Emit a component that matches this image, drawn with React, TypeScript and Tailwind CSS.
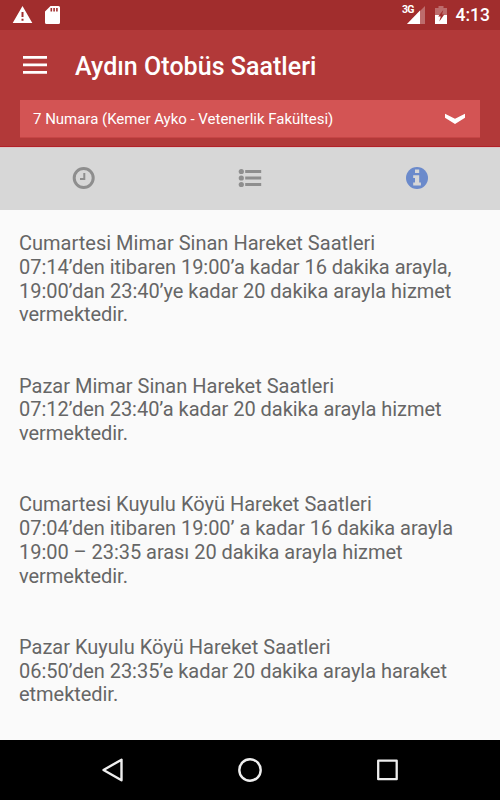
const NOTICES = [
  {
    title: 'Cumartesi Mimar Sinan Hareket Saatleri',
    lines: [
      '07:14’den itibaren 19:00’a kadar 16 dakika arayla,',
      '19:00’dan 23:40’ye kadar 20 dakika arayla hizmet',
      'vermektedir.',
    ],
  },
  {
    title: 'Pazar Mimar Sinan Hareket Saatleri',
    lines: ['07:12’den 23:40’a kadar 20 dakika arayla hizmet', 'vermektedir.'],
  },
  {
    title: 'Cumartesi Kuyulu Köyü Hareket Saatleri',
    lines: [
      '07:04’den itibaren 19:00’ a kadar 16 dakika arayla',
      '19:00 – 23:35 arası 20 dakika arayla hizmet',
      'vermektedir.',
    ],
  },
  {
    title: 'Pazar Kuyulu Köyü Hareket Saatleri',
    lines: ['06:50’den 23:35’e kadar 20 dakika arayla haraket', 'etmektedir.'],
  },
];

function StatusBar() {
  return (
    <div className="flex h-[30px] items-center bg-[#a12d2d] pl-3 pr-[10px] text-white">
      <svg width="22" height="20" viewBox="0 0 22 20" fill="currentColor">
        <path fillRule="evenodd" d="M10.5 1 20.3 18H.7L10.5 1ZM9.5 7v5h2V7h-2Zm0 6.7v2h2v-2h-2Z" />
      </svg>
      <svg className="ml-[11px]" width="16" height="20" viewBox="0 0 16 20" fill="currentColor">
        <path fillRule="evenodd" d="M5.5 1H13.5Q15 1 15 2.5V17.5Q15 19 13.5 19H1.5Q0 19 0 17.5V6.5L5.5 1ZM5.5 3v3.5h1.6V3H5.5Zm2.8 0v3.5h1.6V3H8.3Zm2.8 0v3.5h1.6V3h-1.6Z" />
      </svg>
      <div className="ml-auto flex items-center">
        <span className="mb-[9px] mr-[-7px] text-[10.5px] font-bold leading-none tracking-[-0.8px]">3G</span>
        <svg width="18" height="20" viewBox="0 0 18 20" fill="currentColor">
          <path d="M18 1V19H0L18 1Z" opacity=".3" />
          <path d="M13 5.5V19H0L13 5.5Z" />
        </svg>
        <svg className="ml-[10px]" width="12" height="20" viewBox="0 0 12 20" fill="currentColor">
          <path d="M0 3H3.5V1h5v2H12v7H0V3Z" opacity=".3" />
          <path d="M0 10h12v9H0z" />
          <path d="M8.3 5 3.2 11.5h2.5L4.3 16.5 9.3 9.5H7L8.3 5Z" fill="#a12d2d" />
        </svg>
        <span className="ml-[9px] pt-px text-[17.5px] font-medium leading-none">4:13</span>
      </div>
    </div>
  );
}

function Header() {
  return (
    <header className="h-[117px] border-b border-[#b32028] bg-[#b23939] px-5 text-white">
      <div className="flex h-[70px] items-center">
        <svg className="ml-[3px]" width="24" height="18" viewBox="0 0 24 18" fill="currentColor">
          <path d="M0 0h24v2.7H0zM0 7.5h24v2.7H0zM0 15h24v2.7H0z" />
        </svg>
        <h1 className="ml-7 pt-[3px] text-[25px] font-medium leading-[30px] tracking-[0.04px]">Aydın Otobüs Saatleri</h1>
      </div>
      <button className="flex h-[38px] w-full items-center justify-between border-b border-[#c64545] bg-[#d35454] pl-[13px] pr-[15px]">
        <span className="pt-px text-[15px] leading-5 tracking-[-0.01px]">7 Numara (Kemer Ayko - Vetenerlik Fakültesi)</span>
        <svg width="20" height="11" viewBox="0 0 20 11" fill="currentColor">
          <path d="M0 .8 10 5.8 20 .8v4L10 11 0 4.8Z" />
        </svg>
      </button>
    </header>
  );
}

function Tabs() {
  return (
    <nav className="grid h-[63px] grid-cols-3 items-center justify-items-center border-t border-[#dcc8c8] bg-[#d7d7d7] pb-[2px] text-[#8e8e8e]">
      <svg width="23" height="22" viewBox="0 0 23 22" fill="none" stroke="currentColor">
        <circle cx="11.7" cy="11" r="9.5" strokeWidth="3" />
        <path d="M12.3 6v6H8" strokeWidth="2" />
      </svg>
      <svg width="24" height="20" viewBox="0 0 24 20" fill="currentColor">
        <circle cx="3.3" cy="3.5" r="2.6" />
        <circle cx="3.3" cy="10" r="2.6" />
        <circle cx="3.3" cy="16.5" r="2.6" />
        <path d="M7.2 2h16v3h-16zM7.2 8.5h16v3h-16zM7.2 15h16v3h-16z" />
      </svg>
      <svg width="22" height="22" viewBox="0 0 22 22">
        <circle cx="11" cy="11" r="11" fill="#6b8acb" />
        <path d="M9 2.5h4.2V6H9zM7.2 8.2h6v7.2h1.7v3.1H7.2v-3.1H9v-4.3H7.2z" fill="#d7d7d7" />
      </svg>
    </nav>
  );
}

function NavigationBar() {
  return (
    <footer className="flex h-[60px] items-center justify-between bg-black pl-[102px] pr-[102px] text-[#eee]">
      <svg width="22" height="24" viewBox="0 0 22 24" fill="none" stroke="currentColor" strokeWidth="2.4" strokeLinejoin="round">
        <path d="M1.5 12 19.5 1.7V22.3L1.5 12Z" />
      </svg>
      <svg width="24" height="24" viewBox="0 0 24 24" fill="none" stroke="currentColor" strokeWidth="2.4">
        <circle cx="12" cy="12" r="10.7" />
      </svg>
      <svg width="22" height="22" viewBox="0 0 22 22" fill="none" stroke="currentColor" strokeWidth="2.3" strokeLinejoin="round">
        <rect x="2.2" y="1.7" width="18.5" height="18.5" />
      </svg>
    </footer>
  );
}

export default function App() {
  return (
    <div className="flex h-[800px] w-[500px] flex-col overflow-hidden bg-[#fafafa] font-[Roboto,sans-serif]">
      <StatusBar />
      <Header />
      <Tabs />
      <main className="flex flex-1 flex-col gap-[47.5px] whitespace-nowrap pl-[19px] pt-[22px] text-[20px] leading-[23.75px] text-[#666]">
        {NOTICES.map(notice => (
          <section key={notice.title}>
            <h2 className="tracking-[0.01px]">{notice.title}</h2>
            {notice.lines.map(line => (
              <p key={line} className="tracking-[-0.04px]">{line}</p>
            ))}
          </section>
        ))}
      </main>
      <NavigationBar />
    </div>
  );
}
